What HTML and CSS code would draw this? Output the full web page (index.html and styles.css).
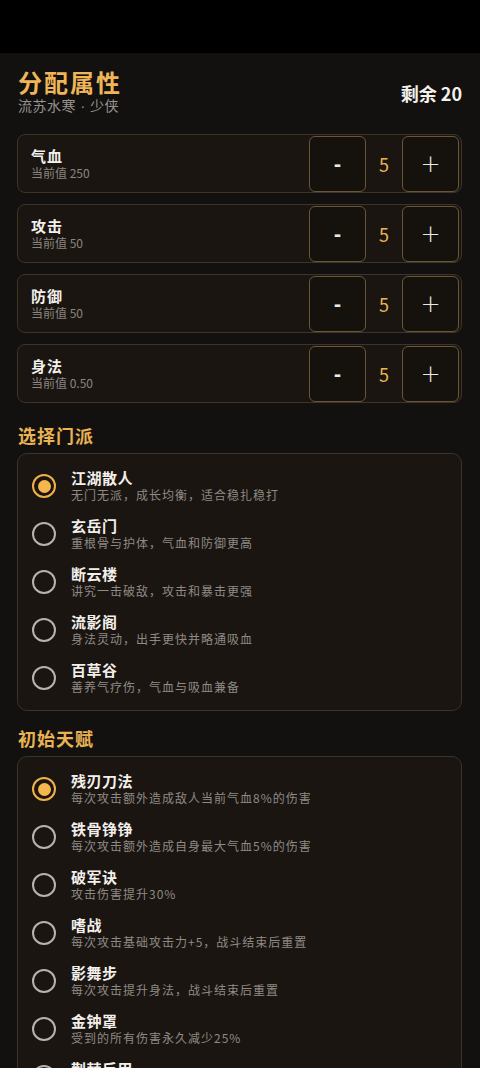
FILE: index.html
```html
<!DOCTYPE html>
<html lang="zh">
<head>
<meta charset="utf-8">
<title>分配属性</title>
<link rel="stylesheet" href="styles.css">
</head>
<body>
<div class="topbar"></div>
<main class="page">
  <header class="head">
    <div class="head-left">
      <h1 class="title">分配属性</h1>
      <div class="subtitle">流苏水寒 · 少侠</div>
    </div>
    <div class="remain">剩余 20</div>
  </header>

  <section class="attrs">
    <div class="attr">
      <div class="attr-text"><div class="attr-name">气血</div><div class="attr-cur">当前值 250</div></div>
      <button class="btn">-</button><span class="val">5</span><button class="btn plus">+</button>
    </div>
    <div class="attr">
      <div class="attr-text"><div class="attr-name">攻击</div><div class="attr-cur">当前值 50</div></div>
      <button class="btn">-</button><span class="val">5</span><button class="btn plus">+</button>
    </div>
    <div class="attr">
      <div class="attr-text"><div class="attr-name">防御</div><div class="attr-cur">当前值 50</div></div>
      <button class="btn">-</button><span class="val">5</span><button class="btn plus">+</button>
    </div>
    <div class="attr">
      <div class="attr-text"><div class="attr-name">身法</div><div class="attr-cur">当前值 0.50</div></div>
      <button class="btn">-</button><span class="val">5</span><button class="btn plus">+</button>
    </div>
  </section>

  <section class="group sect">
    <h2 class="heading">选择门派</h2>
    <div class="panel">
      <div class="opt"><span class="radio on"></span><div><div class="opt-name">江湖散人</div><div class="opt-desc">无门无派，成长均衡，适合稳扎稳打</div></div></div>
      <div class="opt"><span class="radio"></span><div><div class="opt-name">玄岳门</div><div class="opt-desc">重根骨与护体，气血和防御更高</div></div></div>
      <div class="opt"><span class="radio"></span><div><div class="opt-name">断云楼</div><div class="opt-desc">讲究一击破敌，攻击和暴击更强</div></div></div>
      <div class="opt"><span class="radio"></span><div><div class="opt-name">流影阁</div><div class="opt-desc">身法灵动，出手更快并略通吸血</div></div></div>
      <div class="opt"><span class="radio"></span><div><div class="opt-name">百草谷</div><div class="opt-desc">善养气疗伤，气血与吸血兼备</div></div></div>
    </div>
  </section>

  <section class="group talent">
    <h2 class="heading">初始天赋</h2>
    <div class="panel">
      <div class="opt"><span class="radio on"></span><div><div class="opt-name">残刃刀法</div><div class="opt-desc">每次攻击额外造成敌人当前气血8%的伤害</div></div></div>
      <div class="opt"><span class="radio"></span><div><div class="opt-name">铁骨铮铮</div><div class="opt-desc">每次攻击额外造成自身最大气血5%的伤害</div></div></div>
      <div class="opt"><span class="radio"></span><div><div class="opt-name">破军诀</div><div class="opt-desc">攻击伤害提升30%</div></div></div>
      <div class="opt"><span class="radio"></span><div><div class="opt-name">嗜战</div><div class="opt-desc">每次攻击基础攻击力+5，战斗结束后重置</div></div></div>
      <div class="opt"><span class="radio"></span><div><div class="opt-name">影舞步</div><div class="opt-desc">每次攻击提升身法，战斗结束后重置</div></div></div>
      <div class="opt"><span class="radio"></span><div><div class="opt-name">金钟罩</div><div class="opt-desc">受到的所有伤害永久减少25%</div></div></div>
      <div class="opt"><span class="radio"></span><div><div class="opt-name">荆棘反甲</div><div class="opt-desc">受到攻击时反弹部分伤害</div></div></div>
    </div>
  </section>
</main>
</body>
</html>
```

FILE: styles.css
```css
* { box-sizing: border-box; }
html, body { margin: 0; padding: 0; }
body {
  background: #121110;
  color: #efebe6;
  font-family: "Noto Sans CJK SC", "Noto Sans", sans-serif;
  width: 480px;
  overflow: hidden;
}
.topbar { height: 53px; background: #000; }
.page { padding: 16px 18px 0 17px; }

.head { display: flex; align-items: center; justify-content: space-between; padding-left: 1px; }
.title {
  margin: 0 0 2px;
  font-size: 24px;
  line-height: 26px;
  font-weight: 700;
  letter-spacing: 2px;
  color: #f0b557;
}
.subtitle {
  font-family: "Liberation Sans", "Noto Sans CJK SC", sans-serif;
  font-size: 14px;
  line-height: 18px;
  color: #98938d;
  letter-spacing: 0.5px;
}
.remain { font-size: 18px; font-weight: 700; color: #f4f1ec; margin-top: 2px; }

.attrs { display: flex; flex-direction: column; gap: 11px; margin-top: 19px; }
.attr {
  display: flex;
  align-items: center;
  height: 59px;
  padding: 1px 2px 0 13px;
  background: #1a1511;
  border: 1px solid #3d3327;
  border-radius: 8px;
}
.attr-text { flex: 1; }
.attr-name { font-size: 15px; line-height: 18px; font-weight: 700; letter-spacing: 1px; color: #f3f0eb; }
.attr-cur { font-size: 12px; line-height: 16px; color: #8a857f; }
.btn {
  width: 57px;
  height: 56px;
  align-self: flex-start;
  background: #15120e;
  border: 1px solid #6a5536;
  border-radius: 6px;
  color: #ece8e2;
  font-family: "DejaVu Sans", sans-serif;
  font-size: 18px;
  font-weight: 700;
  padding: 0;
}
.btn.plus { font-size: 24px; font-weight: 300; }
.val {
  width: 36px;
  text-align: center;
  font-size: 18px;
  color: #eab552;
}

.group .heading {
  margin: 0 0 5px 1px;
  font-size: 18px;
  line-height: 26px;
  font-weight: 700;
  letter-spacing: 1px;
  color: #e9b254;
}
.sect { margin-top: 19px; }
.talent { margin-top: 14px; }

.panel {
  background: #1a1511;
  border: 1px solid #3d3327;
  border-radius: 10px;
  padding: 8px 0;
}
.opt {
  display: flex;
  align-items: center;
  gap: 15px;
  height: 48px;
  padding-left: 14px;
}
.radio {
  width: 24px;
  height: 24px;
  flex: none;
  border-radius: 50%;
  border: 2.5px solid #b8b3ac;
  display: flex;
  align-items: center;
  justify-content: center;
}
.radio.on { border-color: #f0b247; }
.radio.on::after {
  content: "";
  width: 13px;
  height: 13px;
  border-radius: 50%;
  background: #f5b64d;
}
.opt-name { font-size: 15px; line-height: 18px; font-weight: 700; letter-spacing: 0.5px; color: #f3f0eb; }
.opt-desc { font-size: 12px; line-height: 16px; letter-spacing: 1px; color: #8f8a84; }
```
